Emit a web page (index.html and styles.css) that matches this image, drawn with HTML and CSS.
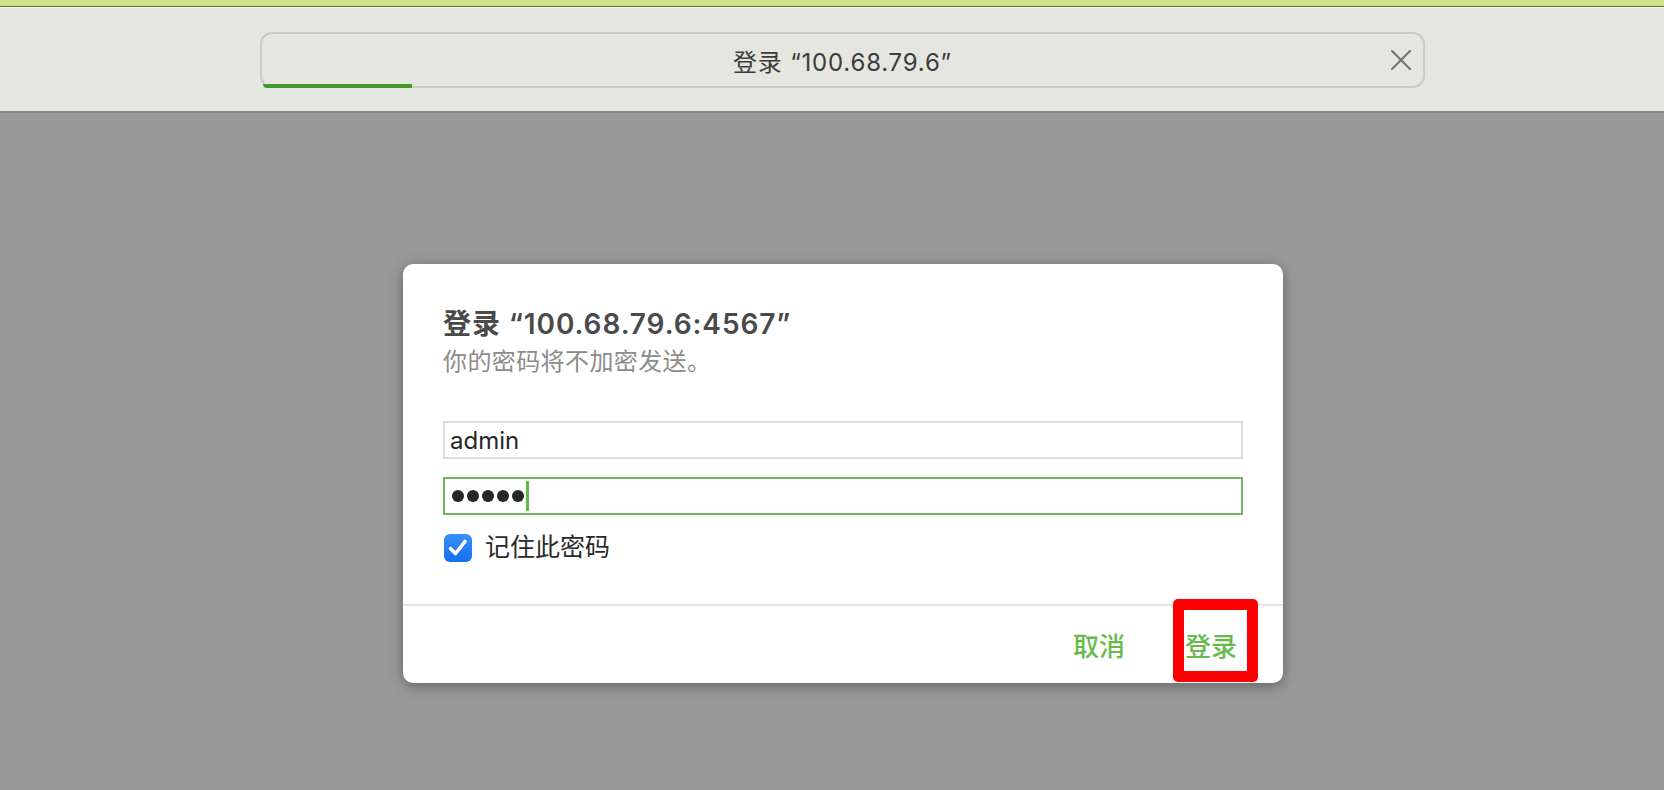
FILE: index.html
```html
<!doctype html>
<html lang="zh-CN">
<head>
    <meta charset="utf-8" />
    <meta name="viewport" content="width=device-width, initial-scale=1.0">
    <title>登录</title>
    <link rel="stylesheet" href="styles.css">
</head>
<body>

    <div class="top-strip"></div>

    <header class="toolbar">
        <div class="urlbar">
            <span class="urlbar-side"></span>
            <span class="urlbar-title">登录 “100.68.79.6”</span>
            <span class="urlbar-side urlbar-close">
                <svg width="20" height="20" viewBox="0 0 20 20">
                    <path d="M1 1 L19 19 M19 1 L1 19" stroke="#707070" stroke-width="2" fill="none" stroke-linecap="round"/>
                </svg>
            </span>
            <div class="urlbar-progress"></div>
        </div>
    </header>

    <main class="stage">
        <div class="dialog">
            <div class="dialog-body">
                <h1 class="dialog-title">登录 “100.68.79.6:4567”</h1>
                <p class="dialog-note">你的密码将不加密发送。</p>

                <div class="field">admin</div>
                <div class="field field-active">
                    <span class="dot"></span><span class="dot"></span><span class="dot"></span><span class="dot"></span><span class="dot"></span>
                    <span class="caret"></span>
                </div>

                <label class="remember">
                    <span class="checkbox">
                        <svg width="24" height="24" viewBox="0 0 24 24">
                            <path d="M4.5 12.5 L9.5 17.5 L19 5.5" stroke="#fff" stroke-width="3.6" fill="none" stroke-linecap="round" stroke-linejoin="round"/>
                        </svg>
                    </span>
                    记住此密码
                </label>
            </div>

            <div class="dialog-footer">
                <button class="action">取消</button>
                <button class="action">登录</button>
                <!-- 标注用的红框 -->
                <div class="highlight"></div>
            </div>
        </div>
    </main>

</body>
</html>
```

FILE: styles.css
```css
body {
    margin: 0;
    font-family: Inter, "Noto Sans CJK SC", sans-serif;
    background-color: #999999;
}

.top-strip {
    height: 6px;
    background-color: #cfe38a;
    border-bottom: 1px solid #5e6e24;
}

.toolbar {
    background-color: #e6e6e0;
    border-top: 1px solid #f2f2ee;
    border-bottom: 2px solid #858585;
    padding: 24px 239px 23px 260px;
}

.urlbar {
    position: relative;
    height: 56px;
    box-sizing: border-box;
    border: 2px solid #cbcbc5;
    border-radius: 12px;
    display: grid;
    grid-template-columns: 1fr auto 1fr;
    align-items: center;
}

.urlbar-title {
    font-size: 24px;
    color: #3c3c3c;
    letter-spacing: 0.8px;
}

.urlbar-close {
    display: flex;
    justify-content: flex-end;
    padding-right: 12px;
}

.urlbar-progress {
    position: absolute;
    left: 1px;
    bottom: -2px;
    width: 149px;
    height: 4px;
    background-color: #40992a;
    border-bottom-left-radius: 10px;
}

.stage {
    min-height: calc(100vh - 113px);
    box-sizing: border-box;
    padding: 151px 0 0 403px;
}

.dialog {
    width: 880px;
    background-color: #ffffff;
    border-radius: 10px;
    box-shadow: 0 3px 14px rgba(0, 0, 0, 0.35);
}

.dialog-body {
    padding: 43px 40px 42px;
}

.dialog-title {
    margin: 0;
    font-size: 28px;
    line-height: 34px;
    font-weight: 600;
    color: #4a4a4a;
    letter-spacing: 0.9px;
}

.dialog-note {
    margin: 6px 0 0;
    font-size: 24px;
    line-height: 30px;
    color: #8c8c8c;
    letter-spacing: 0.4px;
}

.field {
    height: 38px;
    box-sizing: border-box;
    border: 2px solid #dedede;
    padding: 0 5px;
    display: flex;
    align-items: center;
    font-size: 24px;
    color: #262626;
    margin-top: 44px;
}

.field-active {
    border-color: #72b562;
    padding-left: 7px;
    margin-top: 18px;
}

.dot {
    width: 12px;
    height: 12px;
    border-radius: 50%;
    background-color: #262626;
    margin-right: 3px;
}

.caret {
    width: 3px;
    height: 30px;
    background-color: #5cbc43;
    margin-left: -1px;
}

.remember {
    display: flex;
    align-items: center;
    gap: 13px;
    margin-top: 18px;
    padding-left: 1px;
    font-size: 25px;
    line-height: 29px;
    color: #2a2a2a;
}

.checkbox {
    width: 28px;
    height: 28px;
    border-radius: 6px;
    background: linear-gradient(#3b8ef8, #1570ee);
    display: flex;
    align-items: center;
    justify-content: center;
}

.dialog-footer {
    position: relative;
    height: 77px;
    border-top: 2px solid #e6e6e6;
    display: flex;
    justify-content: flex-end;
    align-items: center;
    gap: 60px;
    padding-right: 46px;
}

.action {
    border: none;
    background: none;
    padding: 0;
    font-family: inherit;
    font-size: 26px;
    font-weight: 500;
    color: #68bb4b;
    cursor: pointer;
}

.highlight {
    position: absolute;
    right: 25px;
    top: -7px;
    width: 85px;
    height: 83px;
    box-sizing: border-box;
    border: 11px solid #ff0000;
    border-radius: 5px;
}
```
